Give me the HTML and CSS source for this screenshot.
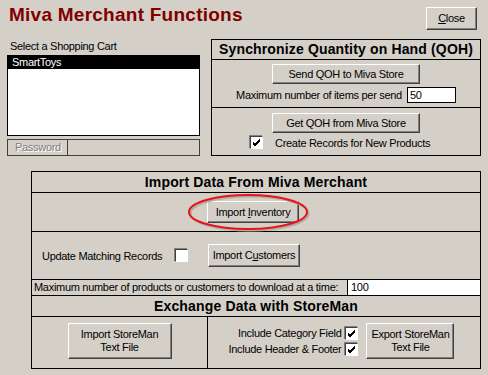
FILE: index.html
```html
<!DOCTYPE html>
<html>
<head>
<meta charset="utf-8">
<link rel="stylesheet" href="styles.css">
</head>
<body>
<div class="win">
  <div class="top">
    <h1 class="title">Miva Merchant Functions</h1>
    <button class="btn close"><u>C</u>lose</button>
  </div>
  <div class="mid">
    <div class="cart">
      <div class="label">Select a Shopping Cart</div>
      <div class="list"><div class="item sel">SmartToys</div></div>
      <div class="pw"><span class="pwlabel">Password</span><span class="pwfield"></span></div>
    </div>
    <div class="qoh">
      <div class="hdr">Synchronize Quantity on Hand (QOH)</div>
      <div class="sec send">
        <button class="btn wide">Send QOH to Miva Store</button>
        <div class="maxrow"><span>Maximum number of items per send</span><span class="field small">50</span></div>
      </div>
      <div class="sec get">
        <button class="btn wide">Get QOH from Miva Store</button>
        <div class="chkrow"><span class="chk"><svg viewBox="0 0 9 9" width="9" height="9"><path d="M1 4 L3 6 L8 1 M1 5 L3 7 L8 2 M1 6 L3 8 L8 3" stroke="#000" stroke-width="1" fill="none"/></svg></span><span>Create Records for New Products</span></div>
      </div>
    </div>
  </div>
  <div class="imp">
    <div class="hdr2">Import Data From Miva Merchant</div>
    <div class="row inv">
      <button class="btn invbtn">Import <u>I</u>nventory</button>
      <svg class="ring" width="124" height="40" viewBox="0 0 124 40">
        <ellipse cx="62" cy="20" rx="59" ry="17" fill="none" stroke="#b0aca4" stroke-width="2" transform="translate(1.5,1.5)"/>
        <ellipse cx="62" cy="20" rx="59" ry="17" fill="none" stroke="#e8141a" stroke-width="2"/>
      </svg>
    </div>
    <div class="row cust">
      <span class="updlabel">Update Matching Records</span>
      <span class="chk empty"></span>
      <button class="btn custbtn">Import C<u>u</u>stomers</button>
    </div>
    <div class="row maxp">
      <span class="maxplabel">Maximum number of products or customers to download at a time:</span>
      <span class="field big">100</span>
    </div>
    <div class="hdr2 ex">Exchange Data with StoreMan</div>
    <div class="row xch">
      <div class="cell left">
        <button class="btn tall">Import StoreMan<br>Text File</button>
      </div>
      <div class="cell right">
        <div class="opts">
          <div class="opt"><span>Include Category Field</span><span class="chk"><svg viewBox="0 0 9 9" width="9" height="9"><path d="M1 4 L3 6 L8 1 M1 5 L3 7 L8 2 M1 6 L3 8 L8 3" stroke="#000" stroke-width="1" fill="none"/></svg></span></div>
          <div class="opt"><span>Include Header &amp; Footer</span><span class="chk"><svg viewBox="0 0 9 9" width="9" height="9"><path d="M1 4 L3 6 L8 1 M1 5 L3 7 L8 2 M1 6 L3 8 L8 3" stroke="#000" stroke-width="1" fill="none"/></svg></span></div>
        </div>
        <button class="btn tall exp">Export StoreMan<br>Text File</button>
      </div>
    </div>
  </div>
</div>
</body>
</html>
```
FILE: styles.css
```css
* { box-sizing: border-box; }
html, body { margin: 0; padding: 0; }
body {
  background: #d4d0c8;
  width: 488px;
  height: 375px;
  overflow: hidden;
  font-family: "Liberation Sans", Arial, sans-serif;
  font-size: 11px;
  letter-spacing: -0.3px;
  color: #000;
}
.win { width: 488px; height: 375px; }

.btn {
  font-family: "Liberation Sans", Arial, sans-serif;
  font-size: 11px;
  letter-spacing: -0.3px;
  color: #000;
  background: #d4d0c8;
  border: 1px solid;
  border-color: #fff #404040 #404040 #fff;
  box-shadow: inset -1px -1px #808080;
  padding: 0;
  margin: 0;
  line-height: 13px;
  display: block;
}
.btn u { text-decoration: underline; }

.top {
  display: flex;
  justify-content: space-between;
  align-items: flex-start;
  height: 39px;
}
.title {
  margin: 4px 0 0 9px;
  font-family: "Liberation Sans", Arial, sans-serif;
  font-size: 19px;
  letter-spacing: 0.25px;
  line-height: 22px;
  font-weight: bold;
  color: #800000;
}
.close {
  width: 51px;
  height: 23px;
  margin: 7px 11px 0 0;
}

.mid {
  display: flex;
  height: 117px;
  padding-left: 7px;
}
.cart { width: 193px; }
.label {
  margin-top: 1px;
  line-height: 13px;
  padding-left: 3px;
}
.list {
  margin-top: 2px;
  height: 81px;
  background: #fff;
  border: 1px solid #000;
}
.item {
  height: 13px;
  line-height: 13px;
  padding-left: 4px;
}
.item.sel { background: #000; color: #fff; }
.pw {
  margin-top: 3px;
  height: 17px;
  border: 1px solid #404040;
  display: flex;
}
.pwlabel {
  width: 60px;
  border-right: 1px solid #404040;
  color: #808080;
  text-shadow: 1px 1px 0 #fff;
  line-height: 15px;
  padding-left: 7px;
}

.qoh {
  margin-left: 11px;
  width: 270px;
  height: 117px;
  border: 1px solid #000;
  display: flex;
  flex-direction: column;
}
.hdr {
  height: 20px;
  border-bottom: 1px solid #000;
  font-weight: bold;
  font-size: 14px;
  letter-spacing: 0.15px;
  line-height: 19px;
  text-align: center;
}
.sec {
  display: flex;
  flex-direction: column;
  align-items: center;
}
.send { height: 48px; border-bottom: 1px solid #000; padding-top: 4px; }
.get { flex: 1; padding-top: 5px; }
.wide { width: 148px; height: 20px; }
.maxrow {
  display: flex;
  align-items: center;
  gap: 5px;
  margin-top: 3px;
}
.field {
  background: #fff;
  border: 1px solid #000;
  line-height: 14px;
  padding-left: 2px;
  display: block;
}
.field.small { width: 49px; height: 16px; }
.chkrow {
  align-self: flex-start;
  display: flex;
  align-items: center;
  margin: 3px 0 0 38px;
  gap: 12px;
}
.chk {
  width: 13px;
  height: 13px;
  background: #fff;
  border: 1px solid;
  border-color: #404040 #fff #fff #404040;
  box-shadow: -1px -1px 0 #808080;
  display: flex;
  align-items: center;
  justify-content: center;
  flex: none;
}

.imp {
  margin: 15px 0 0 31px;
  width: 450px;
  border: 1px solid #000;
}
.hdr2 {
  height: 21px;
  border-bottom: 1px solid #000;
  font-weight: bold;
  font-size: 14px;
  letter-spacing: 0.15px;
  line-height: 20px;
  text-align: center;
}
.row { border-bottom: 1px solid #000; position: relative; }
.inv { height: 39px; padding: 8px 0 0 175px; }
.invbtn { width: 92px; height: 22px; }
.ring { position: absolute; left: 154px; top: -1px; }
.cust {
  height: 48px;
  display: flex;
  align-items: center;
  padding: 0 0 0 10px;
}
.updlabel { width: 133px; }
.custbtn { width: 92px; height: 23px; margin-left: 20px; }
.maxp {
  height: 16px;
  display: flex;
  align-items: stretch;
}
.maxplabel { width: 315px; padding-left: 2px; line-height: 15px; white-space: nowrap; }
.field.big {
  flex: 1;
  border-width: 0 0 0 1px;
  line-height: 15px;
  padding-left: 3px;
}
.ex { height: 21px; }
.xch { display: flex; height: 51px; border-bottom: 0; }
.cell { display: flex; align-items: center; }
.left { width: 176px; border-right: 1px solid #000; justify-content: center; }
.right { flex: 1; justify-content: center; padding-right: 5px; }
.tall { width: 104px; height: 36px; margin-top: -3px; }
.tall.exp { width: 88px; margin-left: 8px; }
.opts { display: flex; flex-direction: column; align-items: flex-end; gap: 3px; margin-top: -3px; }
.opt { display: flex; align-items: center; gap: 4px; }
```
